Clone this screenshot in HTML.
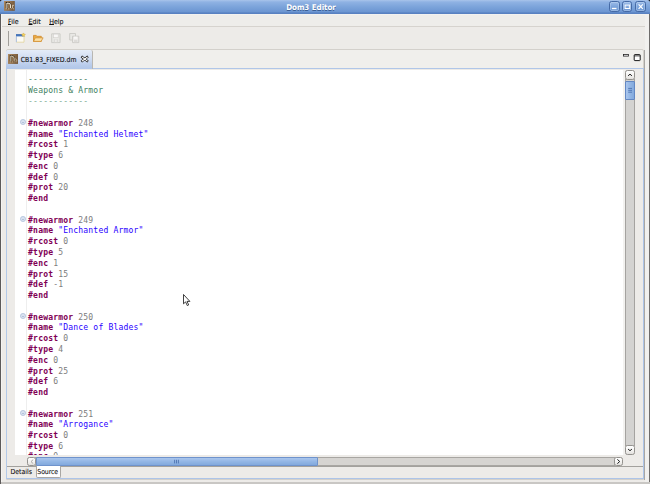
<!DOCTYPE html>
<html><head><meta charset="utf-8"><title>Dom3 Editor</title>
<style>
html,body{margin:0;padding:0;}
body{width:650px;height:484px;overflow:hidden;position:relative;background:#edebe8;font-family:"DejaVu Sans Condensed","DejaVu Sans","Liberation Sans",sans-serif;font-size:6.9px;color:#111;-webkit-text-stroke:0.1px #111;}
div{position:absolute;box-sizing:border-box;}
svg{position:absolute;overflow:visible;}
#title{left:0;top:0;width:650px;height:13.8px;background:linear-gradient(#a9c4ea 0,#8fb2e3 2px,#7ba3da 7px,#6b95d1 12.2px,#5881c1 12.7px,#5881c1 13.8px);}
#title .t{left:0;width:622px;top:0;height:13px;line-height:15.2px;text-align:center;color:#fff;font-weight:bold;font-size:7.9px;text-shadow:0 0.6px 0.6px #3a5f95;-webkit-text-stroke:0;}
.wb{top:1.4px;width:10.4px;height:10.2px;border:0.9px solid #456aa6;border-radius:2.6px;background:linear-gradient(#9dbce8,#7da5dc 50%,#6e98d3);box-shadow:inset 0 0 0 0.7px rgba(200,220,245,.55);}
#menu{left:1px;top:13.8px;width:648px;height:13.3px;background:linear-gradient(#f6f5f3 0,#eeedea 1.2px,#eeedea 100%);border-bottom:0.9px solid #d6d3ce;}
#menu span{position:absolute;top:3.8px;font-size:7px;}
#menu u{text-decoration-thickness:0.75px;text-underline-offset:0.1px;}
#grip{left:8.4px;top:30.5px;width:1px;height:15px;background:#a19f9b;}
#folder{left:6.1px;top:49.3px;width:638.1px;height:430.4px;border:0.9px solid #d3d0cb;border-radius:2px 2px 0 0;background:#f0efec;}
#pane{left:6px;top:68.4px;width:638.2px;height:411.1px;border:1.2px solid #adc4e8;border-left:1.8px solid #b3c9e8;border-top:1.7px solid #b0c6e8;background:#edebe8;}
#tab{left:6.1px;top:49.6px;width:86.8px;height:19.5px;background:linear-gradient(#e4ecf8 0,#d0dcf1 45%,#b9cceb 80%,#b0c6e8 100%);border-radius:2px 2px 0 0;border-right:0.8px solid #b9b7b2;}
#tab .tx{left:14.7px;top:6.0px;font-size:6.88px;white-space:nowrap;}
#ed{left:7.6px;top:70.1px;width:617.2px;height:385.1px;background:linear-gradient(90deg,#fff 0,#fff 615px,#f3f2f0 615.4px);overflow:hidden;}
#ruler{left:0;top:0;width:7.3px;height:388px;background:#edebe8;}
#rul2{left:18.6px;top:0;width:0.8px;height:388px;background:#eeeeee;}
#code{left:28.1px;top:0;font-family:"DejaVu Sans Mono","Liberation Mono",monospace;font-size:8.05px;letter-spacing:0.175px;line-height:11px;white-space:pre;-webkit-text-stroke:0;}
.ln{left:0;height:11px;}
.k{color:#7f0055;font-weight:bold;}
.n{color:#7d7d7d;}
.s{color:#2a00ff;}
.c{color:#3f7f5f;}
.c2{color:#7fae95;}
.fold{left:20.1px;width:5.8px;height:5.8px;border-radius:50%;border:0.8px solid #b7c7df;background:#d9e3f1;}
.fold:after{content:"";position:absolute;left:1px;top:1.7px;width:2.4px;height:0.8px;background:#b3c2da;}
.vtr{left:624.85px;top:79px;width:10.15px;height:367px;background:#d4d3d1;border-left:1.1px solid #a5a3a0;border-right:1.1px solid #a5a3a0;}
.htr{left:35px;top:457.3px;width:580px;height:8.6px;background:#d6d4d1;border-top:0.8px solid #a8a6a2;border-bottom:0.8px solid #a8a6a2;}
.sbtn{border:0.9px solid #94928e;border-radius:2.4px;background:linear-gradient(#ffffff,#f3f2f0 55%,#e2e0dd);}
#vthumb{left:625.2px;top:80.6px;width:9.7px;height:19.2px;border:0.9px solid #6388c4;border-radius:1px;background:linear-gradient(90deg,#aac6ed,#93b6e5 50%,#82a9dd);}
#hthumb{left:35.8px;top:457.1px;width:282.6px;height:8.9px;border:0.9px solid #6f93cc;border-radius:1px;background:linear-gradient(#aac6ed,#93b6e5 50%,#82a9dd);}
#sep{left:7.4px;top:466px;width:636px;height:0.9px;background:#a3a19d;}
#bt2{left:35.6px;top:466.2px;width:25px;height:11.4px;border:0.9px solid #a9a7a3;border-top:none;background:#fff;border-radius:0 0 2px 2px;}
#btabs span{position:absolute;font-size:6.9px;top:468.1px;}
#lb{left:0;top:13.8px;width:2.1px;height:470.2px;background:linear-gradient(90deg,#5c5a5a 0,#5c5a5a 0.9px,#f5f4f2 0.95px,#f5f4f2 2.1px);}
#rb{left:648.85px;top:13.8px;width:1.15px;height:470.2px;background:#6e6c6b;}
#rb2{left:644.2px;top:50px;width:0.9px;height:430px;background:#a9a7a4;}
#rb3{left:645.1px;top:13.8px;width:3.75px;height:470px;background:#f1f0ee;}
#bb{left:1px;top:482.1px;width:649px;height:2px;background:#c9c7c4;}
</style></head><body>
<div id="title"><div class="t">Dom3 Editor</div>
<svg style="left:4.2px;top:1.1px" width="10.8" height="9.8" viewBox="0 0 10.8 9.8"><defs><linearGradient id="ig" x1="0" x2="1" y1="0" y2="0.3"><stop offset="0" stop-color="#b08d64"/><stop offset="0.5" stop-color="#94734e"/><stop offset="1" stop-color="#75583a"/></linearGradient></defs><rect width="10.8" height="9.8" fill="url(#ig)"/><path d="M1.7 1h3.4l2.2 1.7v4.8H5.9V3.6L4.6 2.6H3.9v5H1.9z" fill="#1a130d" opacity="0.85"/><path d="M2.9 2.1v5.2M3.1 2.1q3.4 0.1 3.4 2.7v2.2" fill="none" stroke="#efe6d2" stroke-width="1.05"/><path d="M8.3 4.3h1.7M8.6 4.4v2.8" stroke="#e4d9c0" stroke-width="0.8" fill="none"/><path d="M1.8 7.7h1M4.3 7.9h1M6.6 7.7h1M8.9 7.8h0.9" stroke="#e9dec6" stroke-width="0.8"/></svg>
<div class="wb" style="left:609.2px"></div><div class="wb" style="left:622.1px"></div><div class="wb" style="left:635.4px"></div>
<svg style="left:609px;top:0" width="40" height="13" viewBox="0 0 40 13"><path d="M2.9 8.5h4.6" stroke="#fff" stroke-width="1.3" fill="none"/><rect x="16.1" y="5.1" width="4.6" height="3.4" stroke="#fff" stroke-width="1" fill="none"/><path d="M17.7 6.8h0.4M19 6.8h0.4" stroke="#dfe9f8" stroke-width="1"/><path d="M29.6 4.4l4.2 4.4M33.8 4.4l-4.2 4.4" stroke="#fff" stroke-width="1.2" fill="none"/></svg>
<svg style="left:0;top:0" width="3" height="3" viewBox="0 0 3 3"><path d="M0 0h2.6A2.6 2.6 0 0 0 0 2.6z" fill="#111"/></svg>
<svg style="left:647px;top:0" width="3" height="3" viewBox="0 0 3 3"><path d="M3 0H0.4A2.6 2.6 0 0 1 3 2.6z" fill="#111"/></svg>
</div>
<div id="menu"><span style="left:7px"><u>F</u>ile</span><span style="left:27.5px"><u>E</u>dit</span><span style="left:48.2px"><u>H</u>elp</span></div>
<div id="grip"></div>
<svg style="left:14px;top:32.2px" width="70" height="12" viewBox="0 0 70 12">
 <!-- new -->
 <rect x="2.4" y="2.6" width="7.6" height="7.6" fill="#fbfaf4"/>
 <path d="M2.4 10.2h7.6V4.6" fill="none" stroke="#e2d39b" stroke-width="0.8"/>
 <path d="M2.4 4.4v5.8" fill="none" stroke="#9db4d8" stroke-width="0.8"/>
 <rect x="2" y="2.4" width="8" height="2" fill="#4a7ac2"/>
 <rect x="2" y="2.4" width="8" height="0.8" fill="#2f5fa8"/>
 <path d="M9.4 0.9l0.7 1.2 1.3 0.2-0.9 1 0.2 1.3-1.3-0.6-1.2 0.6 0.2-1.3-0.9-1 1.3-0.2z" fill="#f5d35f" stroke="#c9a13a" stroke-width="0.4"/>
 <!-- open -->
 <path d="M19.5 3.4h2.7l0.9 0.9h4.2v5.1h-7.8z" fill="#eaa944" stroke="#cf8a2c" stroke-width="0.8"/>
 <path d="M19.5 9.4l1.8-3.6h7.8l-2 3.6z" fill="#fbdfa3" stroke="#d28f31" stroke-width="0.8"/>
 <!-- save (disabled) -->
 <path d="M37.7 1.8h8.4v8.8h-8.4z" fill="#e9e8e5" stroke="#cbc9c5" stroke-width="0.9"/>
 <rect x="39.6" y="2.1" width="4.6" height="3.6" fill="#f8f7f6" stroke="#d2d0cc" stroke-width="0.6"/>
 <rect x="39.8" y="7.2" width="4.2" height="3.1" fill="#dddbd8"/>
 <rect x="41.2" y="7.6" width="1.4" height="2.4" fill="#efeeec"/>
 <!-- save all (disabled) -->
 <path d="M55.7 1.5h5.8v6.5h-5.8z" fill="#e9e8e5" stroke="#cbc9c5" stroke-width="0.9"/>
 <path d="M58.5 4.2h6.3v6.4h-6.3z" fill="#eceae8" stroke="#cbc9c5" stroke-width="0.9"/>
 <rect x="60" y="4.6" width="3.3" height="2.2" fill="#f8f7f6"/>
 <rect x="60" y="8" width="3.4" height="2.3" fill="#dddbd8"/>
</svg>
<div id="folder"></div>
<div id="pane"></div>
<div id="tab">
 <svg style="left:2px;top:4.3px" width="10" height="9.9" viewBox="0 0 10 9.9"><rect width="10" height="9.9" fill="url(#ig)"/><path d="M1.6 0.9h3.2l2 1.6v4.9H5.6V3.5L4.4 2.6H3.7v5H1.8z" fill="#3a3128" opacity="0.75"/><path d="M2.8 2v5.2M3 2q3.2 0.1 3.2 2.7v2.2" fill="none" stroke="#cfc5ab" stroke-width="1"/><path d="M7.6 4.4l1.4 2.6" stroke="#c2b89d" stroke-width="0.8" fill="none"/><path d="M1.8 7.9h1M4.2 8h1M6.4 7.8h1M8.2 7.8h0.9" stroke="#d8cdb3" stroke-width="0.7"/></svg>
 <div class="tx">CB1.83_FIXED.dm</div>
 <svg style="left:74.8px;top:6.1px" width="7.4" height="6.1" viewBox="0 0 7.4 6.1"><path d="M1.3 1.2l4.8 3.7M6.1 1.2L1.3 4.9" stroke="#0a0a0a" stroke-width="2.3" stroke-linecap="square" fill="none"/><path d="M1.3 1.2l4.8 3.7M6.1 1.2L1.3 4.9" stroke="#fff" stroke-width="1.15" stroke-linecap="square" fill="none"/></svg>
</div>
<svg style="left:623px;top:53px" width="19" height="10" viewBox="0 0 19 10"><rect x="0.5" y="1.4" width="4.9" height="1.7" fill="#fff" stroke="#222" stroke-width="0.8"/><rect x="11.2" y="1.6" width="6" height="6" rx="0.6" fill="#fff" stroke="#1a1a1a" stroke-width="1"/><path d="M11.2 2.9h6" stroke="#1a1a1a" stroke-width="0.8"/></svg>
<div id="ed"><div id="ruler"></div><div id="rul2"></div></div>
<div class="fold" style="top:119.35px"></div>
<div class="fold" style="top:216.30px"></div>
<div class="fold" style="top:313.25px"></div>
<div class="fold" style="top:410.19px"></div>
<div id="code"><div class="ln" style="top:74px"><span class="c">------------</span></div><div class="ln" style="top:85px"><span class="c">Weapons &amp; Armor</span></div><div class="ln" style="top:96px"><span class="c2">------------</span></div><div class="ln" style="top:118px"><span class="k">#newarmor</span> <span class="n">248</span></div><div class="ln" style="top:129px"><span class="k">#name</span> <span class="s">&quot;Enchanted Helmet&quot;</span></div><div class="ln" style="top:139px"><span class="k">#rcost</span> <span class="n">1</span></div><div class="ln" style="top:150px"><span class="k">#type</span> <span class="n">6</span></div><div class="ln" style="top:161px"><span class="k">#enc</span> <span class="n">0</span></div><div class="ln" style="top:172px"><span class="k">#def</span> <span class="n">0</span></div><div class="ln" style="top:182px"><span class="k">#prot</span> <span class="n">20</span></div><div class="ln" style="top:193px"><span class="k">#end</span></div><div class="ln" style="top:215px"><span class="k">#newarmor</span> <span class="n">249</span></div><div class="ln" style="top:225px"><span class="k">#name</span> <span class="s">&quot;Enchanted Armor&quot;</span></div><div class="ln" style="top:236px"><span class="k">#rcost</span> <span class="n">0</span></div><div class="ln" style="top:247px"><span class="k">#type</span> <span class="n">5</span></div><div class="ln" style="top:258px"><span class="k">#enc</span> <span class="n">1</span></div><div class="ln" style="top:269px"><span class="k">#prot</span> <span class="n">15</span></div><div class="ln" style="top:279px"><span class="k">#def</span> <span class="n">-1</span></div><div class="ln" style="top:290px"><span class="k">#end</span></div><div class="ln" style="top:312px"><span class="k">#newarmor</span> <span class="n">250</span></div><div class="ln" style="top:322px"><span class="k">#name</span> <span class="s">&quot;Dance of Blades&quot;</span></div><div class="ln" style="top:333px"><span class="k">#rcost</span> <span class="n">0</span></div><div class="ln" style="top:344px"><span class="k">#type</span> <span class="n">4</span></div><div class="ln" style="top:355px"><span class="k">#enc</span> <span class="n">0</span></div><div class="ln" style="top:366px"><span class="k">#prot</span> <span class="n">25</span></div><div class="ln" style="top:376px"><span class="k">#def</span> <span class="n">6</span></div><div class="ln" style="top:387px"><span class="k">#end</span></div><div class="ln" style="top:409px"><span class="k">#newarmor</span> <span class="n">251</span></div><div class="ln" style="top:419px"><span class="k">#name</span> <span class="s">&quot;Arrogance&quot;</span></div><div class="ln" style="top:430px"><span class="k">#rcost</span> <span class="n">0</span></div><div class="ln" style="top:441px"><span class="k">#type</span> <span class="n">6</span></div><div class="ln" style="top:451px"><span class="k">#enc</span> <span class="n">0</span></div></div>
<div id="edclip" style="left:7.6px;top:455.2px;width:617px;height:11px;background:#edebe8"></div>
<svg style="left:183px;top:294.4px" width="9" height="13" viewBox="0 0 9 13"><path d="M0.5 0.5v9.3l2.1-1.9 1.7 3.7 1.4-0.7-1.7-3.5h2.9z" fill="#fff" stroke="#111" stroke-width="0.8" stroke-linejoin="round"/></svg>
<div class="vtr"></div>
<div class="sbtn" style="left:625.1px;top:70.3px;width:9.8px;height:9.9px"></div>
<div class="sbtn" style="left:625px;top:445.2px;width:9.7px;height:9.5px"></div>
<div id="vthumb"></div>
<svg style="left:625px;top:70px" width="10" height="386" viewBox="0 0 10 386"><path d="M3.1 5.8L5 4.2 6.9 5.8" stroke="#1a1a1a" stroke-width="1" fill="none"/><path d="M3.1 379.1L5 380.7 6.9 379.1" stroke="#1a1a1a" stroke-width="1" fill="none"/><path d="M3.2 18.4h3.8M3.2 20.3h3.8M3.2 22.2h3.8" stroke="#3f66a6" stroke-width="0.75"/></svg>
<div class="htr"></div>
<div class="sbtn" style="left:26.5px;top:457.1px;width:9.1px;height:9px"></div>
<div class="sbtn" style="left:614.2px;top:457.1px;width:9.2px;height:8.9px"></div>
<div id="hthumb"></div>
<svg style="left:26.5px;top:457px" width="600" height="10" viewBox="0 0 600 10"><path d="M6.2 2.6L4 4.6 6.2 6.6" stroke="#a5a39f" stroke-width="0.9" fill="none"/><path d="M590.4 2.4L592.7 4.5 590.4 6.6" stroke="#1a1a1a" stroke-width="1" fill="none"/><path d="M147.6 2.8v3.6M149.5 2.8v3.6M151.4 2.8v3.6" stroke="#3f66a6" stroke-width="0.75"/></svg>
<div id="sep"></div>
<div id="bt2"></div>
<div id="btabs" style="left:0;top:0"><span style="left:10.4px">Details</span><span style="left:37.3px;letter-spacing:-0.08px">Source</span></div>
<div id="lb"></div><div id="rb"></div><div id="rb3"></div><div id="rb2"></div><div id="bb"></div>
</body></html>
